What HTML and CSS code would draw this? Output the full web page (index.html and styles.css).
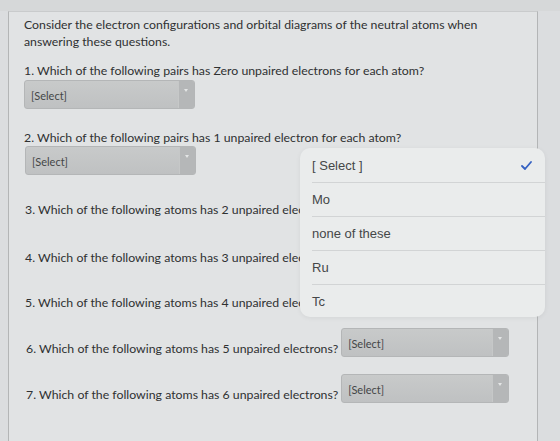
FILE: index.html
```html
<!DOCTYPE html>
<html lang="en">
<head>
    <meta charset="UTF-8">
    <meta name="viewport" content="width=device-width, initial-scale=1.0">
    <title>Quiz: Electron Configurations</title>
    <link rel="stylesheet" href="styles.css">
</head>
<body>
    <div class="top-strip"></div>
    <div class="quiz-panel">
        <p class="intro">Consider the electron configurations and orbital diagrams of the neutral atoms when<br>answering these questions.</p>

        <div class="question q1">
            <p>1. Which of the following pairs has Zero unpaired electrons for each atom?</p>
            <div class="select"><span class="select-label">[Select]</span><span class="select-arrow"></span></div>
        </div>

        <div class="question q2">
            <p>2. Which of the following pairs has 1 unpaired electron for each atom?</p>
            <div class="select"><span class="select-label">[Select]</span><span class="select-arrow"></span></div>
        </div>

        <div class="question q3"><p>3. Which of the following atoms has 2 unpaired electrons?</p></div>
        <div class="question q4"><p>4. Which of the following atoms has 3 unpaired electrons?</p></div>
        <div class="question q5"><p>5. Which of the following atoms has 4 unpaired electrons?</p></div>

        <div class="question inline q6">
            <p>6. Which of the following atoms has 5 unpaired electrons?</p>
            <div class="select wide"><span class="select-label">[Select]</span><span class="select-arrow"></span></div>
        </div>

        <div class="question inline q7">
            <p>7. Which of the following atoms has 6 unpaired electrons?</p>
            <div class="select wide"><span class="select-label">[Select]</span><span class="select-arrow"></span></div>
        </div>

        <!-- opened picker of question 2, drawn over the rows below it -->
        <ul class="picker">
            <li class="picker-item selected">[ Select ]
                <svg class="check" width="11" height="9" viewBox="0 0 11 9"><path d="M1 5 L4 8 L10 1" fill="none" stroke="#3561c2" stroke-width="1.8" stroke-linecap="round" stroke-linejoin="round"/></svg>
            </li>
            <li class="picker-item">Mo</li>
            <li class="picker-item">none of these</li>
            <li class="picker-item">Ru</li>
            <li class="picker-item">Tc</li>
        </ul>
    </div>
</body>
</html>
```

FILE: styles.css
```css
:root {
    --page: #e1e3e4;
    --edge: #b3b5b6;
    --text: #2f3132;
    --select-dark: #b5b7b8;
}

html, body {
    margin: 0;
    padding: 0;
}

body {
    background: #dbdddf;
    font-family: Lato, "Open Sans", sans-serif;
    color: var(--text);
    height: 441px;
    overflow: hidden;
}

.top-strip {
    height: 11px;
    background: #d6d8d9;
}

.quiz-panel {
    position: relative;
    box-sizing: border-box;
    margin-left: 8px;
    width: 530px;
    height: 440px;
    padding: 4px 15px 0 15px;
    background: var(--page);
    border-top: 1px solid #c9cbcc;
    border-left: 1px solid var(--edge);
    border-right: 1px solid var(--edge);
    font-size: 12.3px;
    line-height: 17px;
}

.quiz-panel p {
    margin: 0;
}

.intro {
    margin-bottom: 12px !important;
}

.question.q2 { margin-top: 20px; }
.question.q3 { margin-top: 26px; }
.question.q4 { margin-top: 31px; }
.question.q5 { margin-top: 28px; }
.question.q6 { margin-top: 17px; }
.question.q7 { margin-top: 17px; }

.question.q3 p,
.question.q4 p,
.question.q5 p {
    margin-left: 1px;
}

.question.inline {
    display: flex;
    align-items: flex-end;
    gap: 3px;
}

.question.inline p {
    margin-left: 2px;
}

/* native-looking grey select box */
.select {
    display: flex;
    box-sizing: border-box;
    width: 171px;
    height: 29px;
    margin-top: 1px;
    border: 1px solid #b4b6b7;
    border-radius: 3px;
    background: linear-gradient(#c8caca, #bfc1c2);
    overflow: hidden;
}

.q2 .select {
    margin-top: 0;
    margin-left: 1px;
}

.select.wide {
    width: 168px;
    height: 29px;
    margin-top: 0;
}

.select-label {
    flex: 1;
    padding: 9px 0 0 6px;
    font-size: 11px;
    line-height: 12px;
    color: #444647;
}

.select-arrow {
    position: relative;
    width: 15px;
    background: var(--select-dark);
    border-left: 1px solid #c6c8c8;
}

.select-arrow::after {
    content: '';
    position: absolute;
    left: 5px;
    top: 8px;
    border-left: 2.5px solid transparent;
    border-right: 2.5px solid transparent;
    border-top: 3px solid #e4e6e6;
}

/* dropdown picker list */
.picker {
    position: absolute;
    left: 291px;
    top: 136px;
    width: 245px;
    height: 169px;
    margin: 0;
    padding: 0 0 0 12px;
    box-sizing: border-box;
    list-style: none;
    background: #eaecec;
    border-radius: 10px;
    box-shadow: 0 1px 5px rgba(0, 0, 0, 0.06);
    font-family: "Liberation Sans", Arial, sans-serif;
    font-size: 13px;
    color: #454748;
}

.picker-item {
    position: relative;
    display: flex;
    align-items: center;
    height: 33px;
    border-bottom: 1px solid #d2d4d5;
}

.picker-item.selected {
    height: 34px;
}

.picker-item:last-child {
    border-bottom: none;
}

.check {
    position: absolute;
    right: 13px;
    top: 13px;
}
```
